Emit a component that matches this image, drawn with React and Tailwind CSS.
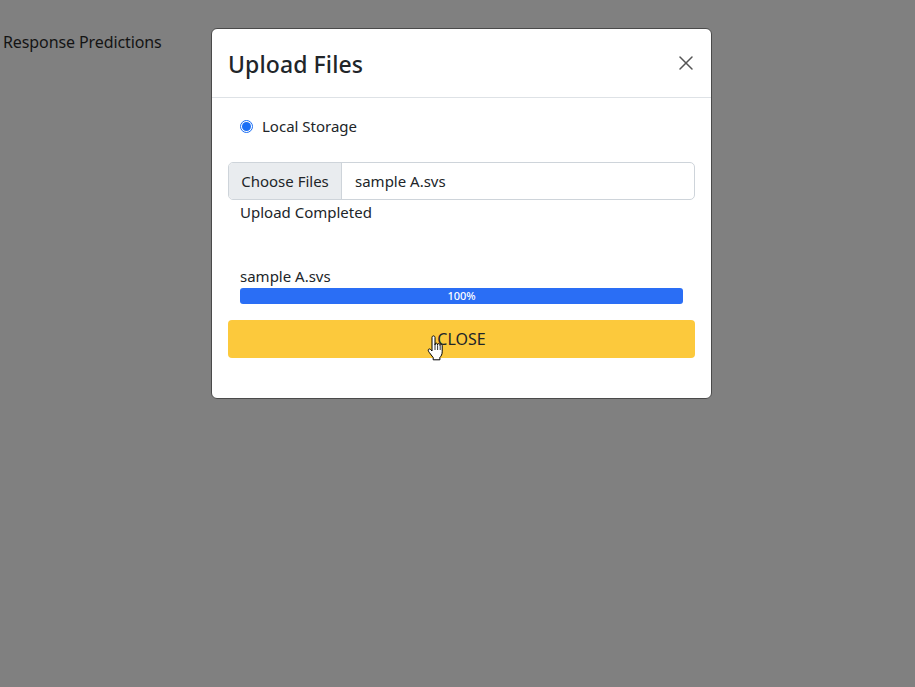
import React from "react";
import { X } from "lucide-react";

const font = { fontFamily: '"Noto Sans", "Open Sans", sans-serif' };

const HandCursor = () => (
  <svg width="20" height="26" viewBox="0 0 20 26" className="absolute left-[426px] top-[335px]">
    <path
      d="M6 2.5c0-1 .7-1.6 1.5-1.6S9 1.5 9 2.5V10l.2-1.2c.3-.9 1.8-.9 2.1 0l.2 1.4.2-.9c.3-.9 1.8-.9 2.1 0l.2 1.3.3-.6c.4-.8 1.8-.6 1.9.5v6.3c0 2.6-1.1 4.4-2.3 5.6v2.4H7.2v-2.2L3.3 17.5c-.8-1-1.4-2.3-.9-3 .5-.8 1.6-.7 2.4.2L6 16V2.5z"
      fill="#fff"
      stroke="#000"
      strokeWidth="1"
      strokeLinejoin="round"
    />
    <path d="M9 10v5M11.6 10.5V15M14.2 11V15" stroke="#000" strokeWidth="0.8" />
  </svg>
);

export default function App() {
  return (
    <div className="relative min-h-[687px] w-full bg-[#808080] overflow-hidden" style={font}>
      <div className="px-[3px] pt-[30px] text-[16px] text-[#141414] leading-6 tracking-[-0.1px]">
        Response Predictions
      </div>

      <div className="absolute left-[211px] top-[28px] w-[501px] bg-white rounded-md border border-[#4a4a4a] text-[#212529]">
        <div className="flex items-center justify-between px-4 h-[69px] border-b border-[#dee2e6]">
          <h5 className="text-[23px] font-medium leading-6 pt-[2px] tracking-[0.1px]">Upload Files</h5>
          <button className="text-[#555] mr-[-3px]">
            <X size={24} strokeWidth={1.5} />
          </button>
        </div>

        <div className="px-4 pt-[18px] pb-[40px]">
          <label className="flex items-center gap-[9px] pl-[12px] text-[15px] leading-5">
            <span className="w-[13px] h-[13px] rounded-full border border-[#1a6ef5] flex items-center justify-center">
              <span className="w-[9px] h-[9px] rounded-full bg-[#1a6ef5]" />
            </span>
            Local Storage
          </label>

          <div className="mt-[26px] flex h-[38px] border border-[#ced4da] rounded-[5px] overflow-hidden text-[15px]">
            <div className="w-[113px] bg-[#e9ecef] border-r border-[#ced4da] flex items-center justify-center">
              Choose Files
            </div>
            <div className="flex items-center pl-[13px]">sample A.svs</div>
          </div>

          <div className="pl-[12px] mt-0 text-[15px] leading-6">Upload Completed</div>

          <div className="pl-[12px] pr-[12px] mt-[40px]">
            <div className="text-[15px] leading-6">sample A.svs</div>
            <div className="h-[16px] rounded-[3px] bg-[#2a6ef5] flex items-center justify-center text-white text-[11px] font-medium">
              100%
            </div>
          </div>

          <button className="mt-[16px] w-full h-[38px] rounded-[4px] bg-[#fcc93c] text-[16px] text-[#212529] flex items-center justify-center">
            CLOSE
          </button>
        </div>
      </div>

      <HandCursor />
    </div>
  );
}
